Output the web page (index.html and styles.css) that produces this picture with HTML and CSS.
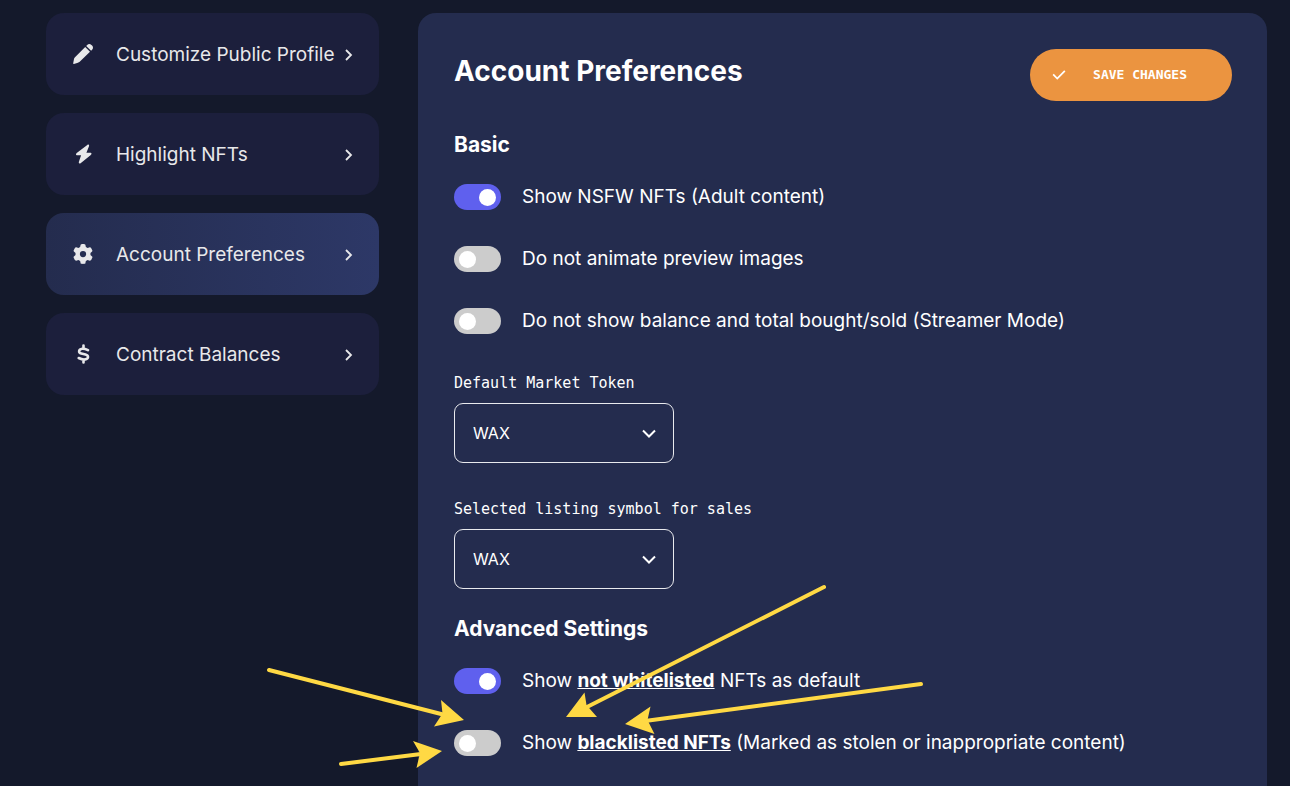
FILE: index.html
```html
<!DOCTYPE html>
<html lang="en">
<head>
<meta charset="utf-8">
<meta name="viewport" content="width=device-width, initial-scale=1">
<title>Account Preferences</title>
<link rel="stylesheet" href="styles.css">
</head>
<body>
<div class="page">
  <nav class="sidebar" aria-label="Settings">
    <a class="nav-item" href="#profile">
      <svg class="nav-icon" viewBox="0 0 20 20" aria-hidden="true"><path d="M12.2 2.9 17 7.7 6.7 17.800c-.5.5-1.100.8-1.800 1L.9 19.900c-.5.1-.8-.2-.7-.7L1 15c.2-.7.500-1.300 1-1.800z"/><path d="m13.200 1.900 1-1c1.200-1.200 3-1.200 4.200 0l.7.7c1.200 1.200 1.200 3 0 4.200l-1 1z"/></svg>
      <span class="nav-label">Customize Public Profile</span>
      <svg class="nav-chevron" viewBox="0 0 12 12" aria-hidden="true"><path d="m3 1 5 5-5 5"/></svg>
    </a>
    <a class="nav-item" href="#highlight">
      <svg class="nav-icon" viewBox="0 0 20 20" aria-hidden="true"><path d="M14.300.9 3.700 9c-1.300 1.100-.6 2.200.5 2.200h3.900L5.900 17.800c-.5 1.600.6 2.300 1.700 1.400l10.200-8.300c1.300-1.100.6-2.200-.5-2.200h-3.900L16 2.200C16.500.6 15.400 0 14.300.9z"/></svg>
      <span class="nav-label">Highlight NFTs</span>
      <svg class="nav-chevron" viewBox="0 0 12 12" aria-hidden="true"><path d="m3 1 5 5-5 5"/></svg>
    </a>
    <a class="nav-item nav-item-active" href="#preferences" aria-current="page">
      <svg class="nav-icon" viewBox="0 0 512 512" aria-hidden="true"><path d="M495.900 166.600c3.200 8.700.5 18.400-6.400 24.600l-43.300 39.400c1.100 8.300 1.700 16.800 1.700 25.400s-.6 17.100-1.700 25.400l43.300 39.400c6.900 6.200 9.600 15.900 6.400 24.600-4.400 11.900-9.700 23.300-15.800 34.300l-4.700 8.100c-6.600 11-14 21.400-22.100 31.200-5.900 7.200-15.700 9.600-24.500 6.800l-55.700-17.700c-13.400 10.300-28.200 18.900-44 25.400l-12.500 57.100c-2 9.100-9 16.300-18.200 17.800-13.800 2.300-28 3.500-42.500 3.500s-28.700-1.200-42.500-3.500c-9.200-1.500-16.200-8.700-18.200-17.800l-12.500-57.100c-15.800-6.500-30.600-15.100-44-25.400l-55.600 17.800c-8.800 2.800-18.600.3-24.500-6.800-8.100-9.800-15.500-20.200-22.100-31.200l-4.700-8.100c-6.100-11-11.400-22.400-15.800-34.300-3.200-8.700-.5-18.400 6.400-24.600l43.300-39.400C64.600 273.100 64 264.600 64 256s.6-17.100 1.700-25.400l-43.300-39.400c-6.900-6.200-9.600-15.900-6.400-24.600 4.400-11.900 9.700-23.300 15.800-34.300l4.700-8.100c6.600-11 14-21.400 22.100-31.200 5.900-7.200 15.700-9.600 24.500-6.800l55.700 17.700c13.400-10.300 28.200-18.900 44-25.400l12.500-57.100c2-9.100 9-16.300 18.200-17.800C227.300 1.200 241.500 0 256 0s28.700 1.200 42.500 3.500c9.200 1.500 16.200 8.700 18.200 17.800l12.500 57.100c15.800 6.500 30.600 15.100 44 25.400l55.700-17.700c8.800-2.800 18.600-.3 24.500 6.800 8.100 9.800 15.500 20.200 22.100 31.200l4.700 8.100c6.100 11 11.400 22.400 15.700 34.400zM256 336a80 80 0 1 0 0-160 80 80 0 1 0 0 160z"/></svg>
      <span class="nav-label">Account Preferences</span>
      <svg class="nav-chevron" viewBox="0 0 12 12" aria-hidden="true"><path d="m3 1 5 5-5 5"/></svg>
    </a>
    <a class="nav-item" href="#balances">
      <svg class="nav-icon nav-icon-line" viewBox="0 0 20 20" aria-hidden="true"><path d="M10.500 1.500v3M10.500 15.500v3M15 6.200C12.500 5 10.800 4.500 9.200 4.700 5.500 5.200 5.100 8.600 8.300 9.500l4.200 1.100c3.600 1 3.200 4.300-.4 4.800-2 .3-4.300-.4-6.400-1.400"/></svg>
      <span class="nav-label">Contract Balances</span>
      <svg class="nav-chevron" viewBox="0 0 12 12" aria-hidden="true"><path d="m3 1 5 5-5 5"/></svg>
    </a>
  </nav>

  <main class="panel">
    <header class="panel-header">
      <h1 class="panel-title">Account Preferences</h1>
      <button class="save-button" type="button">
        <svg class="save-icon" viewBox="0 0 12 12" aria-hidden="true"><path d="m1 5.500 3.500 3.500 6.500-6.500"/></svg>
        <span class="save-label">SAVE CHANGES</span>
      </button>
    </header>

    <section class="group">
      <h2 class="group-title">Basic</h2>
      <div class="toggle-list">
        <label class="toggle-row"><input class="toggle" type="checkbox" checked><span>Show NSFW NFTs (Adult content)</span></label>
        <label class="toggle-row"><input class="toggle" type="checkbox"><span>Do not animate preview images</span></label>
        <label class="toggle-row"><input class="toggle" type="checkbox"><span>Do not show balance and total bought/sold (Streamer Mode)</span></label>
      </div>
      <div class="field-list">
        <div class="field">
          <label class="field-label" for="market-token">Default Market Token</label>
          <div class="select-box">
            <select class="select" id="market-token"><option>WAX</option></select>
            <svg class="select-arrow" viewBox="0 0 14 14" aria-hidden="true"><path d="m1 4.500 6 6 6-6"/></svg>
          </div>
        </div>
        <div class="field">
          <label class="field-label" for="listing-symbol">Selected listing symbol for sales</label>
          <div class="select-box">
            <select class="select" id="listing-symbol"><option>WAX</option></select>
            <svg class="select-arrow" viewBox="0 0 14 14" aria-hidden="true"><path d="m1 4.500 6 6 6-6"/></svg>
          </div>
        </div>
      </div>
    </section>

    <section class="group">
      <h2 class="group-title">Advanced Settings</h2>
      <div class="toggle-list">
        <label class="toggle-row"><input class="toggle" type="checkbox" checked><span>Show <b class="term">not whitelisted</b> NFTs as default</span></label>
        <label class="toggle-row"><input class="toggle" type="checkbox"><span>Show <b class="term">blacklisted NFTs</b> (Marked as stolen or inappropriate content)</span></label>
      </div>
    </section>
  </main>

  <svg class="arrows" width="660" height="190" viewBox="264 582 660 190" aria-hidden="true">
    <path class="arrow-line" d="M269 670 445 715M341 764l80-10M824 587 585 708M921 684 645 721"/>
    <path class="arrow-head" d="m464 720-23-20 1.500 13.500-8.500 13zM442 751l-29-10 7 12-3.500 15zM566 717l18.500-24.500 2 12.500 10.500 12zM625 724l25.500-17.500-3 13.500 7 14z"/>
  </svg>
</div>
</body>
</html>
```

FILE: styles.css
```css
* {
  box-sizing: border-box;
}

body {
  margin: 0;
  background: #14192b;
  color: #fff;
  font-family: Inter, "Open Sans", sans-serif;
  font-size: 19px;
  line-height: 26px;
}

.page {
  position: relative;
  display: grid;
  grid-template-columns: minmax(300px, 333fr) minmax(0, 849fr);
  column-gap: 39px;
  min-height: 100vh;
  padding: 13px 23px 0 46px;
}

.sidebar {
  display: flex;
  flex-direction: column;
  gap: 18px;
}

.nav-item {
  display: flex;
  align-items: center;
  gap: 23px;
  padding: 29px 24px 27px 27px;
  border-radius: 18px;
  background: #1c1f3c;
  color: #e8e8ea;
  text-decoration: none;
}

.nav-item-active {
  background: linear-gradient(90deg, #242c4e, #2d3867);
}

.nav-icon {
  flex: none;
  width: 20px;
  height: 20px;
  margin-bottom: 3px;
  fill: currentColor;
}

.nav-icon-line {
  fill: none;
  stroke: currentColor;
  stroke-width: 2.6;
  stroke-linecap: round;
}

.nav-label {
  flex: 1;
  white-space: nowrap;
}

.nav-chevron {
  flex: none;
  width: 12px;
  height: 12px;
  margin-left: -23px;
  fill: none;
  stroke: currentColor;
  stroke-width: 1.8;
}

.panel {
  padding: 36px 35px 30px 36px;
  border-radius: 18px 18px 0 0;
  background: #242c4e;
}

.panel-header {
  display: flex;
  align-items: flex-start;
  justify-content: space-between;
  margin-bottom: 30px;
}

.panel-title {
  margin: 0;
  font-size: 28px;
  font-weight: 700;
  line-height: 44px;
}

.save-button {
  display: flex;
  align-items: center;
  gap: 27px;
  padding: 16px 45px 16px 22px;
  border: 0;
  border-radius: 26px;
  background: #eb9440;
  color: #fff;
  font-family: "DejaVu Sans Mono", monospace;
  font-size: 13px;
  font-weight: 700;
  line-height: 20px;
}

.save-icon {
  width: 14px;
  height: 14px;
  fill: none;
  stroke: currentColor;
  stroke-width: 1.5;
}

.group {
  margin-bottom: 26px;
}

.group-title {
  margin: 0 0 25px;
  font-size: 21px;
  font-weight: 700;
  line-height: 28px;
}

.toggle-list {
  display: grid;
  gap: 36px;
}

.toggle-row {
  display: flex;
  align-items: center;
  gap: 21px;
}

.toggle {
  appearance: none;
  flex: none;
  display: flex;
  align-items: center;
  width: 47px;
  height: 26px;
  margin: 0;
  padding: 0 5px;
  border-radius: 13px;
  background: #ccc;
}

.toggle::before {
  content: "";
  width: 17px;
  height: 17px;
  border-radius: 50%;
  background: #fff;
}

.toggle:checked {
  justify-content: flex-end;
  background: #5f60ee;
}

.term {
  font-weight: 700;
  text-decoration: underline;
}

.field-list {
  display: grid;
  gap: 36px;
  margin-top: 39px;
}

.field {
  display: grid;
  gap: 10px;
}

.field-label {
  font-family: "DejaVu Sans Mono", monospace;
  font-size: 15px;
  line-height: 20px;
}

.select-box {
  display: grid;
  align-items: center;
  width: 220px;
}

.select {
  appearance: none;
  grid-area: 1 / 1;
  width: 100%;
  padding: 16px 18px;
  border: 1px solid #e9eaee;
  border-radius: 9px;
  background: transparent;
  color: #fff;
  font-family: inherit;
  font-size: 16px;
  line-height: 26px;
}

.select-arrow {
  grid-area: 1 / 1;
  justify-self: end;
  width: 14px;
  height: 14px;
  margin-right: 18px;
  fill: none;
  stroke: #fff;
  stroke-width: 2;
  pointer-events: none;
}

.arrows {
  position: absolute;
  top: 582px;
  left: 264px;
  pointer-events: none;
}

.arrow-line {
  fill: none;
  stroke: #ffd944;
  stroke-width: 4;
  stroke-linecap: round;
}

.arrow-head {
  fill: #ffd944;
}
```
